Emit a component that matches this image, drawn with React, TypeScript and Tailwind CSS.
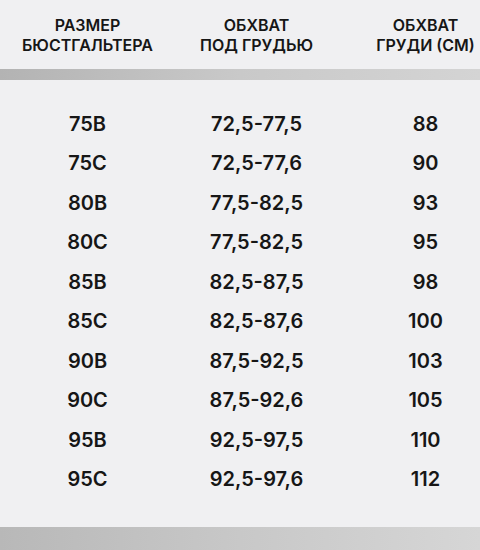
const rows: [string, string, string][] = [
  ['75B', '72,5-77,5', '88'],
  ['75C', '72,5-77,6', '90'],
  ['80B', '77,5-82,5', '93'],
  ['80C', '77,5-82,5', '95'],
  ['85B', '82,5-87,5', '98'],
  ['85C', '82,5-87,6', '100'],
  ['90B', '87,5-92,5', '103'],
  ['90C', '87,5-92,6', '105'],
  ['95B', '92,5-97,5', '110'],
  ['95C', '92,5-97,6', '112'],
];

const headers = [
  ['РАЗМЕР', 'БЮСТГАЛЬТЕРА'],
  ['ОБХВАТ', 'ПОД ГРУДЬЮ'],
  ['ОБХВАТ', 'ГРУДИ (СМ)'],
];

const App = () => {
  return (
    <div className="w-[480px] h-[550px] overflow-hidden bg-[#f0f0f2] flex flex-col text-[#161616] font-['Inter',sans-serif]">
      <div className="grid grid-cols-3 w-[510px] pl-[3px] pt-[15px] mb-[14px]">
        {headers.map((h, i) => (
          <div key={i} className="flex flex-col items-center text-[16px] leading-[20px] font-semibold whitespace-nowrap">
            <span>{h[0]}</span>
            <span>{h[1]}</span>
          </div>
        ))}
      </div>
      <div className="h-[11px] bg-gradient-to-r from-[#b3b3b3] via-[#c9c9c9] to-[#d4d4d4]" />
      <div className="flex flex-col mt-[24px]">
        {rows.map((r) => (
          <div key={r[0]} className="grid grid-cols-3 w-[510px] pl-[3px] h-[39.5px] items-center text-[20px] font-semibold">
            {r.map((c, j) => (
              <div key={j} className="flex justify-center whitespace-nowrap">
                {c}
              </div>
            ))}
          </div>
        ))}
      </div>
      <div className="mt-auto h-[23px] bg-gradient-to-r from-[#b8b8b8] via-[#c8c8c8] to-[#d6d6d6]" />
    </div>
  );
};

export default App;
